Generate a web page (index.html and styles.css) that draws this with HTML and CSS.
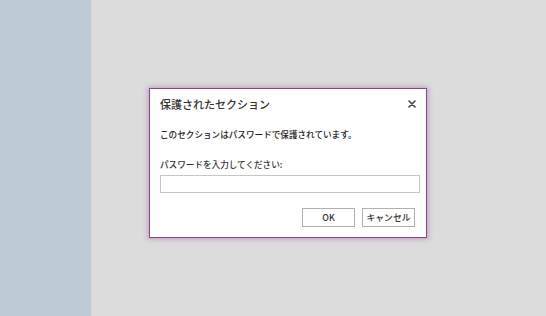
FILE: index.html
```html
<!DOCTYPE html>
<html lang="ja">
<head>
<meta charset="utf-8">
<link rel="stylesheet" href="styles.css">
</head>
<body>
<div class="app">
  <div class="sidebar"></div>
  <div class="main"></div>
</div>
<div class="dialog">
  <div class="header">
    <div class="title">保護されたセクション</div>
    <svg class="close" width="8" height="8" viewBox="0 0 8 8"><path d="M1 1L7 7M7 1L1 7" stroke="#444" stroke-width="1.6" stroke-linecap="round"/></svg>
  </div>
  <div class="message">このセクションはパスワードで保護されています。</div>
  <div class="label">パスワードを入力してください:</div>
  <input class="pw" type="password">
  <div class="buttons">
    <button class="btn">OK</button>
    <button class="btn">キャンセル</button>
  </div>
</div>
</body>
</html>
```
FILE: styles.css
```css
html, body {
  margin: 0;
  padding: 0;
  width: 546px;
  height: 316px;
  overflow: hidden;
  font-family: "Noto Sans CJK JP", "Noto Sans", sans-serif;
  color: #333;
}
.app {
  display: flex;
  height: 316px;
}
.sidebar {
  width: 91px;
  background: #bdcad6;
  border-right: 1px solid #d2d8e0;
}
.main {
  flex: 1;
  background: #dcdcdc;
}
.dialog {
  position: absolute;
  left: 149px;
  top: 88px;
  width: 276px;
  height: 148px;
  box-sizing: content-box;
  background: #fff;
  border: 1px solid #8a4686;
  box-shadow: 0 0 5px 1px rgba(150, 80, 150, 0.45);
}
.header {
  display: flex;
  align-items: center;
  justify-content: space-between;
  padding: 7px 10px 0 10px;
  height: 16px;
}
.title {
  font-size: 11px;
  line-height: 16px;
  font-weight: 500;
  color: #333;
}
.close {
  display: block;
  margin-top: -1px;
}
.message {
  margin: 16px 0 0 10px;
  font-size: 8.6px;
  line-height: 12px;
  font-weight: 500;
  color: #222;
}
.label {
  margin: 18px 0 0 10px;
  font-size: 8.6px;
  line-height: 12px;
  font-weight: 500;
  color: #333;
}
.pw {
  display: block;
  box-sizing: border-box;
  margin: 5px 0 0 10px;
  width: 260px;
  height: 18px;
  border: 1px solid #c6c6c6;
  padding: 0 4px;
  outline: none;
}
.buttons {
  display: flex;
  justify-content: flex-end;
  gap: 7px;
  margin: 15px 11px 0 0;
}
.btn {
  box-sizing: border-box;
  width: 53px;
  height: 19px;
  padding: 0;
  background: #fff;
  border: 1px solid #b0b0b0;
  border-radius: 0;
  font-family: "Noto Sans CJK JP", "Noto Sans", sans-serif;
  font-size: 8.8px;
  font-weight: 500;
  color: #333;
}
```
